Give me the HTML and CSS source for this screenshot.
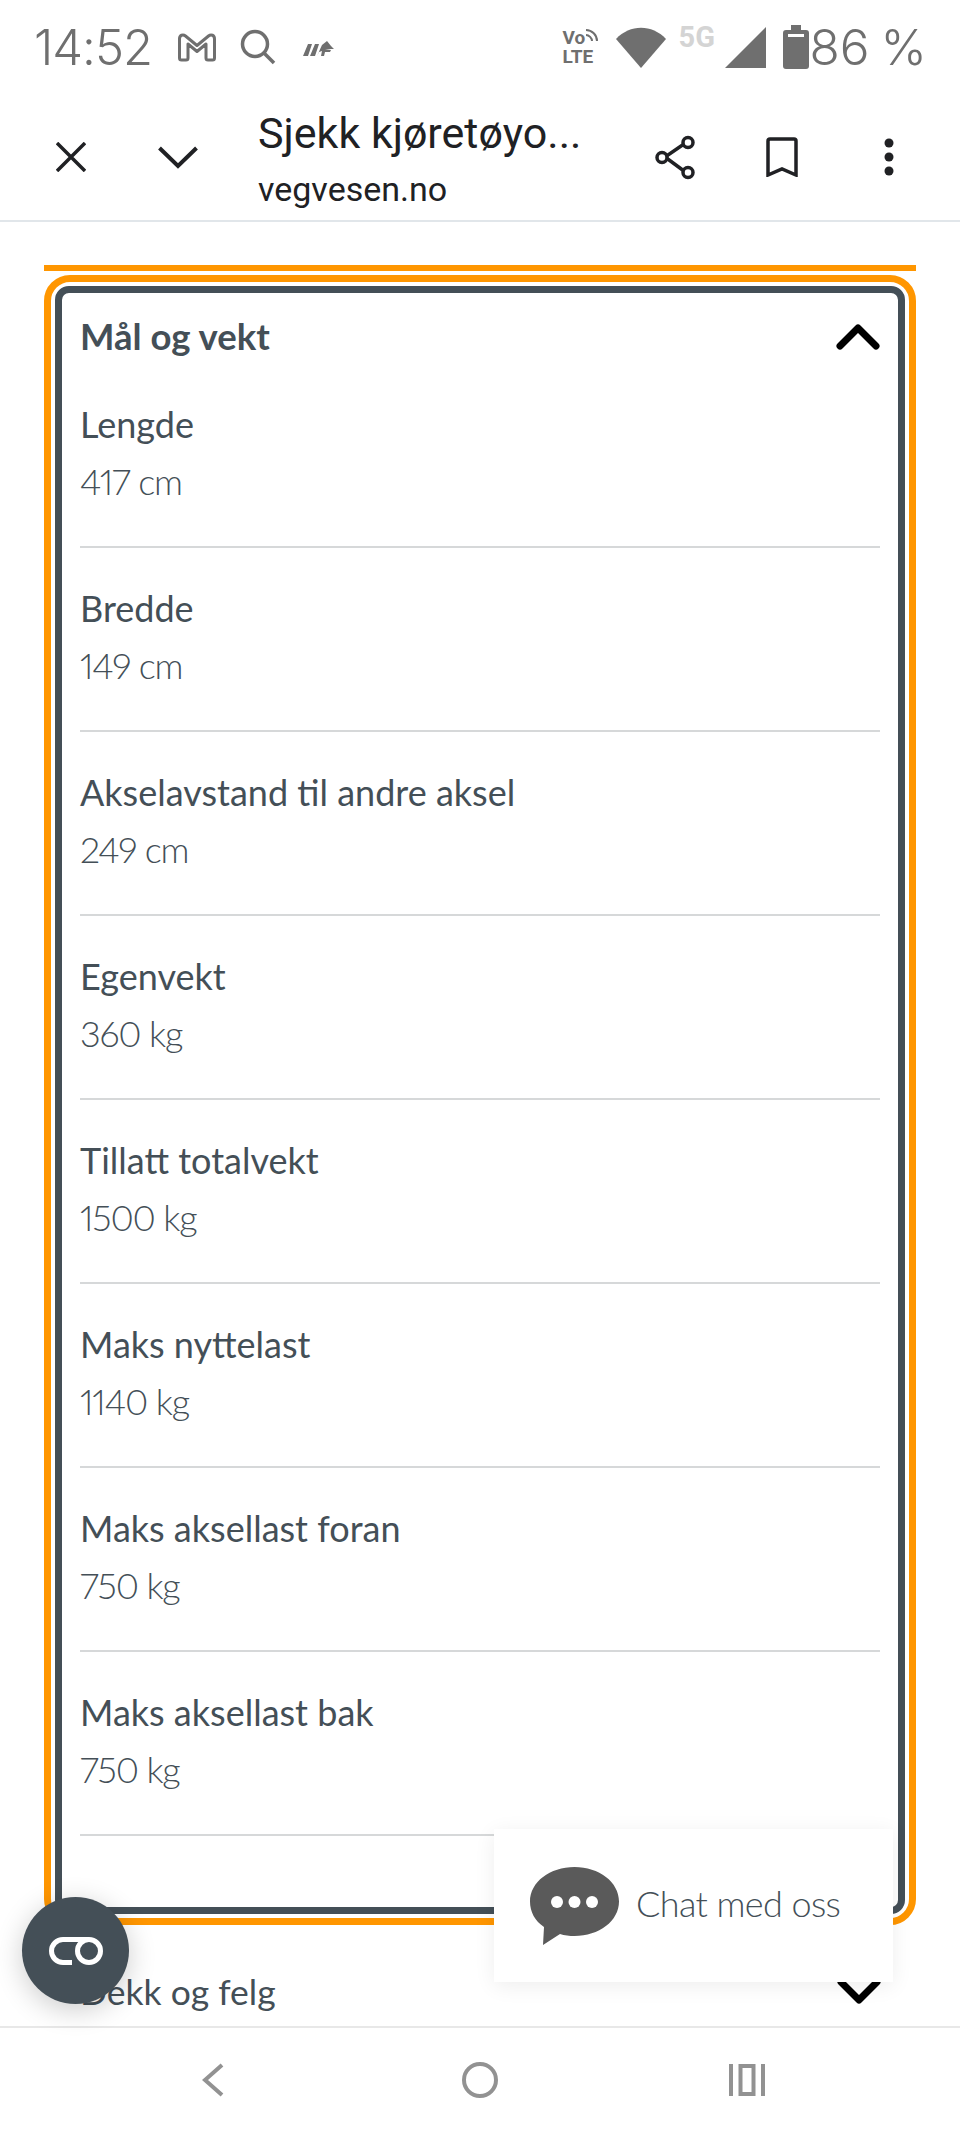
FILE: index.html
```html
<!DOCTYPE html>
<html lang="no">
<head>
<meta charset="utf-8">
<title>Sjekk kjøretøyopplysninger</title>
<link rel="stylesheet" href="styles.css">
</head>
<body>
<div class="screen">
  <header class="status">
    <span class="clock">14:52</span>
    <svg class="st-m" width="40" height="31" viewBox="0 0 40 31"><path d="M2.500 26V7c0-4 3.500-5 6-3l11.500 9.500L31.500 4c2.500-2 6-1 6 3v19a2 2 0 0 1-2 2H31a2 2 0 0 1-2-2V12l-9 7.500L11 12v14a2 2 0 0 1-2 2H4.500a2 2 0 0 1-2-2Z" fill="none" stroke="#6f6f6f" stroke-width="3" stroke-linejoin="round"/></svg>
    <svg class="st-s" width="36" height="36" viewBox="0 0 36 36"><circle cx="15" cy="15" r="12.500" fill="none" stroke="#6f6f6f" stroke-width="3.500"/><path d="M24 24l10 10" stroke="#6f6f6f" stroke-width="3.500"/></svg>
    <svg class="st-x" width="31" height="17" viewBox="0 0 31 17"><path d="M0 16L5 4h4L5 16ZM7 16l5-12h4l-4 12ZM14 16l5-11 5-4 4 5 3 3H22l6 1-1 2h-5l-1 4h-3l1-5-3 1-2 4Z" fill="#6f6f6f"/></svg>
    <span class="spacer"></span>
    <div class="volte"><span class="vo">Vo<svg width="14" height="14" viewBox="0 0 14 14"><path d="M1 2c6 0 11 5 11 11M1 7c3 0 6 3 6 6" fill="none" stroke="#6f6f6f" stroke-width="2"/></svg></span><span class="lte">LTE</span></div>
    <svg class="st-wifi" width="50" height="41" viewBox="0 0 50 41"><path d="M0 12C14-3 36-3 50 12L25 41Z" fill="#6f6f6f"/></svg>
    <span class="fiveg">5G</span>
    <svg class="st-sig" width="41" height="41" viewBox="0 0 41 41"><path d="M41 0V41H0Z" fill="#6f6f6f"/></svg>
    <svg class="st-bat" width="26" height="44" viewBox="0 0 26 44"><path d="M8 0h10v5h5a3 3 0 0 1 3 3v33a3 3 0 0 1-3 3H3a3 3 0 0 1-3-3V8a3 3 0 0 1 3-3h5Z" fill="#6f6f6f"/><rect x="5" y="9" width="16" height="3" fill="#fff"/></svg>
    <span class="pct">86</span><span class="pct pct-sign">%</span>
  </header>

  <nav class="toolbar">
    <svg class="tb-x" width="30" height="30" viewBox="0 0 30 30"><path d="M1 1l28 28M29 1L1 29" stroke="#202124" stroke-width="3.500"/></svg>
    <svg class="tb-v" width="40" height="23" viewBox="0 0 40 23"><path d="M1.500 2L20 20 38.500 2" fill="none" stroke="#202124" stroke-width="4"/></svg>
    <div class="tb-title">
      <div class="tb-name">Sjekk kjøretøyo...</div>
      <div class="tb-url">vegvesen.no</div>
    </div>
    <svg class="tb-share" width="40" height="45" viewBox="0 0 40 45"><path d="M29 9L10 22l19 14" fill="none" stroke="#202124" stroke-width="3.500"/><circle cx="33" cy="7.500" r="5" fill="#fff" stroke="#202124" stroke-width="3.500"/><circle cx="7" cy="22.500" r="5" fill="#fff" stroke="#202124" stroke-width="3.500"/><circle cx="33" cy="37.500" r="5" fill="#fff" stroke="#202124" stroke-width="3.500"/></svg>
    <svg class="tb-book" width="32" height="40" viewBox="0 0 32 40"><path d="M2 38V4a2 2 0 0 1 2-2h24a2 2 0 0 1 2 2v34l-14-6Z" fill="none" stroke="#202124" stroke-width="3.500"/></svg>
    <svg class="tb-dots" width="10" height="38" viewBox="0 0 10 38"><circle cx="5" cy="5" r="4.500" fill="#202124"/><circle cx="5" cy="19" r="4.500" fill="#202124"/><circle cx="5" cy="33" r="4.500" fill="#202124"/></svg>
  </nav>

  <main class="content">
    <div class="bar"></div>
    <section class="focus">
      <div class="panel">
        <div class="panel-head">
          <h2 class="panel-title">Mål og vekt</h2>
          <svg class="chev" width="44" height="27" viewBox="0 0 44 27"><path d="M4 23L22 5l18 18" fill="none" stroke="#000" stroke-width="7" stroke-linecap="round" stroke-linejoin="round"/></svg>
        </div>
        <dl class="spec"><dt>Lengde</dt><dd>417 cm</dd></dl>
        <dl class="spec"><dt>Bredde</dt><dd>149 cm</dd></dl>
        <dl class="spec"><dt>Akselavstand til andre aksel</dt><dd>249 cm</dd></dl>
        <dl class="spec"><dt>Egenvekt</dt><dd>360 kg</dd></dl>
        <dl class="spec"><dt>Tillatt totalvekt</dt><dd>1500 kg</dd></dl>
        <dl class="spec"><dt>Maks nyttelast</dt><dd>1140 kg</dd></dl>
        <dl class="spec"><dt>Maks aksellast foran</dt><dd>750 kg</dd></dl>
        <dl class="spec"><dt>Maks aksellast bak</dt><dd>750 kg</dd></dl>
      </div>
    </section>
    <div class="next-head">
      <span class="next-title">Dekk og felg</span>
      <svg class="chev" width="44" height="27" viewBox="0 0 44 27"><path d="M4 4l18 18L40 4" fill="none" stroke="#000" stroke-width="7" stroke-linecap="round" stroke-linejoin="round"/></svg>
    </div>
  </main>

  <footer class="navbar">
    <svg width="22" height="34" viewBox="0 0 22 34"><path d="M20 2L3 17l17 15" fill="none" stroke="#929292" stroke-width="4"/></svg>
    <svg class="nav-home" width="36" height="36" viewBox="0 0 36 36"><circle cx="18" cy="18" r="16" fill="none" stroke="#929292" stroke-width="4"/></svg>
    <svg class="nav-recent" width="36" height="32" viewBox="0 0 36 32"><path d="M2 0v32M34 0v32" stroke="#929292" stroke-width="4"/><rect x="11.500" y="2" width="13" height="28" fill="none" stroke="#929292" stroke-width="4"/></svg>
  </footer>

  <aside class="chat">
    <svg class="chat-icon" width="89" height="78" viewBox="0 0 89 78"><path d="M44.500 0C69 0 89 15 89 34.500S69 69 44.500 69c-5 0-10-.5-14.500-2L13 78l1-18C5 54 0 45 0 34.500 0 15 20 0 44.500 0Z" fill="#5a5a5a"/><circle cx="27" cy="35" r="6" fill="#fff"/><circle cx="44.500" cy="35" r="6" fill="#fff"/><circle cx="62" cy="35" r="6" fill="#fff"/></svg>
    <span class="chat-text">Chat med oss</span>
  </aside>

  <button class="fab" type="button" aria-label="Innstillinger">
    <svg width="56" height="28" viewBox="0 0 56 28"><path d="M24 25.500H15a11.500 11.500 0 0 1 0-23H41" fill="none" stroke="#fff" stroke-width="5"/><circle cx="41" cy="14" r="11.500" fill="none" stroke="#fff" stroke-width="5"/></svg>
  </button>
</div>
</body>
</html>
```

FILE: styles.css
```css
* { box-sizing: border-box; }
html, body { margin: 0; padding: 0; background: #fff; }
.screen {
  position: relative;
  width: 960px;
  height: 2133px;
  overflow: hidden;
  display: flex;
  flex-direction: column;
  background: #fff;
  font-family: Lato, "Open Sans", sans-serif;
}

/* status bar */
.status {
  height: 94px;
  flex: none;
  display: flex;
  align-items: center;
  padding: 0 33px 0 34px;
  color: #6f6f6f;
  font-family: Inter, Roboto, sans-serif;
}
.clock { font-size: 49px; font-weight: 300; letter-spacing: -1px; width: 143px; }
.st-s { margin-left: 23px; }
.st-x { margin-left: 27px; margin-top: 2px; }
.spacer { flex: 1; }
.volte { display: flex; flex-direction: column; font-family: Roboto, sans-serif; font-weight: 700; font-size: 19px; line-height: 19px; width: 39px; }
.vo { display: flex; align-items: flex-start; }
.fiveg { font-family: Roboto, sans-serif; font-weight: 700; font-size: 29px; color: #d4d4d4; margin-left: 13px; margin-top: -20px; width: 38px; }
.st-wifi { margin-left: 14px; }
.st-sig { margin-left: 8px; }
.st-bat { margin-left: 17px; margin-top: -1px; }
.pct { font-size: 49.500px; font-weight: 300; margin-left: 1px; }
.pct-sign { margin-left: 11px; }

/* browser toolbar */
.toolbar {
  height: 128px;
  flex: none;
  display: flex;
  align-items: center;
  padding-left: 56px;
  border-bottom: 2px solid #e1e6ea;
  color: #202124;
  font-family: Roboto, sans-serif;
}
.tb-v { margin-left: 72px; }
.tb-title { margin-left: 60px; width: 397px; margin-top: 0; }
.tb-name { font-size: 43px; line-height: 56px; white-space: nowrap; margin-top: -3px; margin-bottom: 3px; }
.tb-url { font-size: 34px; line-height: 46px; margin-top: 5px; margin-bottom: -5px; }
.tb-share { margin-left: 0; }
.tb-book { margin-left: 71px; }
.tb-dots { margin-left: 86px; }

/* content */
.content {
  flex: 1;
  min-height: 0;
  overflow: hidden;
  padding: 43px 44px 0;
  color: #444f57;
}
.bar { height: 6px; background: #ff9600; }
.focus {
  margin-top: 4px;
  height: 1650px;
  border: 7px solid #ff9600;
  border-radius: 26px;
  padding: 4px;
}
.panel {
  height: 100%;
  border: 7px solid #444f57;
  border-radius: 14px;
  padding: 0 18px;
}
.panel-head {
  height: 86px;
  display: flex;
  align-items: center;
  justify-content: space-between;
}
.panel-title { margin: 0; font-size: 36.500px; font-weight: 700; }
.chev { flex: none; }
.spec {
  margin: 0;
  height: 184px;
  padding-top: 38px;
  border-bottom: 2px solid #d6d8d9;
}
.spec:first-of-type { height: 169px; padding-top: 23px; }
.spec dt { font-size: 36px; line-height: 44px; }
.spec dd { margin: 13px 0 0; font-size: 36px; line-height: 44px; font-weight: 300; letter-spacing: -1.200px; font-variant-numeric: proportional-nums; }

.next-head {
  display: flex;
  align-items: center;
  justify-content: space-between;
  padding: 45px 35px 0 37px;
}
.next-title { font-size: 35.500px; margin-left: -1px; }

/* bottom navigation */
.navbar {
  height: 107px;
  flex: none;
  display: flex;
  align-items: center;
  padding: 0 0 2px 202px;
  border-top: 2px solid #e8e8e8;
  background: #fff;
}
.nav-home { margin-left: 238px; }
.nav-recent { margin-left: 231px; }

/* overlays */
.chat {
  position: absolute;
  left: 494px;
  top: 1829px;
  width: 399px;
  height: 153px;
  display: flex;
  align-items: center;
  padding: 0 0 0 36px;
  background: #fff;
  box-shadow: 0 4px 20px rgba(0,0,0,.07);
}
.chat-text { margin-left: 17px; font-size: 36px; font-weight: 300; color: #444f57; letter-spacing: -.6px; position: relative; top: -3px; }
.fab {
  position: absolute;
  left: 22px;
  top: 1897px;
  width: 107px;
  height: 107px;
  padding: 0;
  border: 0;
  border-radius: 50%;
  background: #444f57;
  box-shadow: 0 6px 28px rgba(0,0,0,.2);
  display: flex;
  align-items: center;
  justify-content: center;
}
```
